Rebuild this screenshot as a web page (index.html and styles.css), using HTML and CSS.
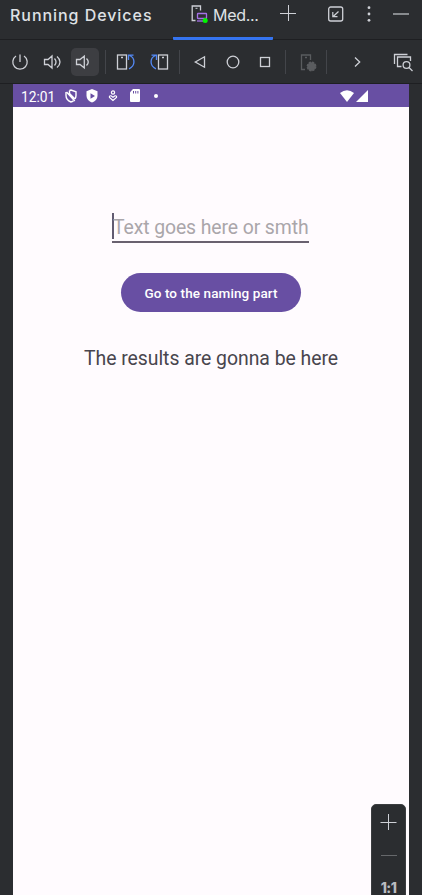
FILE: index.html
```html
<!DOCTYPE html>
<html lang="en">
<head>
<meta charset="utf-8">
<title>Running Devices</title>
<link rel="stylesheet" href="styles.css">
</head>
<body>
<main class="panel">
  <header class="header">
    <h1 class="title">Running Devices</h1>
    <div class="tab">
      <svg class="tab-icon" width="18" height="20" viewBox="0 0 18 20" fill="none">
        <path d="M4.500 16.500H1.200V2H9.500V6.500" stroke="#ced0d6" stroke-width="1.300"/>
        <path d="M4.500 4.300H6.500" stroke="#ced0d6"/>
        <rect x="6.500" y="9.500" width="9" height="5" rx=".5" stroke="#a571e6" stroke-width="1.300"/>
        <path d="M6 17H12" stroke="#a571e6" stroke-width="1.300"/>
        <circle cx="14.200" cy="16.600" r="2.500" fill="#00f500"/>
      </svg>
      <span>Med...</span>
    </div>
    <svg class="head-icon add" width="18" height="18" viewBox="0 0 18 18"><path d="M9.500 1V17M1 9.500H17" stroke="#ced0d6" fill="none"/></svg>
    <svg class="head-icon dock" width="18" height="18" viewBox="0 0 18 18" fill="none" stroke="#ced0d6">
      <rect x="1.700" y="2" width="14" height="14" rx="2" stroke-width="1.300"/>
      <path d="M11.500 6.500L6.200 11.500M5.800 7V11.700H10.500" stroke-width="1.200"/>
    </svg>
    <svg class="head-icon more" width="6" height="18" viewBox="0 0 6 18" fill="#ced0d6"><circle cx="3" cy="2.700" r="1.400"/><circle cx="3" cy="9" r="1.400"/><circle cx="3" cy="15.300" r="1.400"/></svg>
    <svg class="head-icon hide" width="16" height="18" viewBox="0 0 16 18"><path d="M0 9H16" stroke="#9a9ca0" stroke-width="1.700"/></svg>
  </header>

  <nav class="toolbar">
    <svg class="tool power" viewBox="0 0 28 28"><path d="M14 6.500V14M10 8A7.200 7.200 0 1 0 18 8"/></svg>
    <svg class="tool vol-up" viewBox="0 0 28 28"><path d="M6.500 11.500H10L14 8V20L10 16.500H6.500ZM16.500 10.500Q19.500 14 16.500 17.500M19 8.500Q22 11 22 14T19 19.500"/></svg>
    <svg class="tool vol-down" viewBox="0 0 28 28"><path d="M5.500 11.500H9L13.300 8V20L9 16.500H5.500ZM15.500 10.500Q19 14 15.500 17.500"/></svg>
    <i class="sep after-volume"></i>
    <svg class="tool rotate-left" viewBox="0 0 28 28"><rect x="5.500" y="7" width="9" height="14"/><path d="M9 9.500H11"/><path class="blue" d="M17 20.800C23.500 18 23.500 10 17.500 7.500M16.500 12V7.200H21.500"/></svg>
    <svg class="tool rotate-right" viewBox="0 0 28 28"><rect x="13.500" y="7" width="9" height="14"/><path d="M17 9.500H19"/><path class="blue" d="M11 20.800C4.500 18 4.500 10 10.500 7.500M11.500 12V7.200H6.500"/></svg>
    <i class="sep"></i>
    <svg class="tool back" viewBox="0 0 28 28"><path d="M9.300 14L18.500 8.800V19.200Z"/></svg>
    <svg class="tool home" viewBox="0 0 28 28"><circle cx="14" cy="14" r="5.800"/></svg>
    <svg class="tool overview" viewBox="0 0 28 28"><rect x="9.500" y="9.500" width="9" height="9"/></svg>
    <i class="sep"></i>
    <svg class="tool settings" viewBox="0 0 28 28"><path d="M11 21.500H7.500V7H16.500V12M11 9.500H13"/><circle class="gear" cx="17.500" cy="18.500" r="4.200"/></svg>
    <i class="sep after-settings"></i>
    <svg class="tool next" viewBox="0 0 28 28"><path d="M12 9.500L16.700 14L12 18.500"/></svg>
    <svg class="tool inspect" viewBox="0 0 28 28"><path d="M5.500 16V6.500H18.500M12.500 18.500H8.500V9H21.500V13"/><circle cx="17.500" cy="17" r="3.400"/><path d="M20 19.500L23.500 23"/></svg>
  </nav>

  <section class="device">
    <div class="status">
      <span class="clock">12:01</span>
      <svg class="shield" width="12" height="14" viewBox="0 0 12 14" fill="none" stroke="#fff" stroke-width="1.400"><path d="M4.500 1.500L6 1L11 2.800V6.500C11 8 10.600 9 10 10M8.500 12L6 13C3 11.800 1 9.500 1 6.500V3"/><path d="M1.500 3L9.800 12M4.500 1.500V4.500L10 10"/></svg>
      <svg class="protect" width="12" height="14" viewBox="0 0 12 14"><path d="M6 0L11.500 2.200V6.500C11.500 10 9 12.500 6 13.500C3 12.500.5 10 .5 6.500V2.200Z" fill="#fff"/><path d="M4.500 4.200L9 7L4.500 9.800Z" fill="#684fa3"/></svg>
      <svg class="care" width="10" height="12" viewBox="0 0 10 12" fill="none" stroke="#fff" stroke-width="1.200"><circle cx="5" cy="2.500" r="1.600"/><path d="M5 10.500L1.500 7.500Q1 5.500 3 5.800L5 7.200L7 5.800Q9 5.500 8.500 7.500Z"/></svg>
      <svg class="sd" width="10" height="13" viewBox="0 0 10 13"><path d="M3 0H9Q10 0 10 1V12Q10 13 9 13H1Q0 13 0 12V3.200Z" fill="#fff"/><path d="M3.500 2V4.500M5.700 2V4.500M7.900 2V4.500" stroke="#684fa3"/></svg>
      <i class="dot"></i>
      <svg class="wifi" width="14" height="12" viewBox="0 0 14 12"><path d="M0 3Q7-2.500 14 3L7 12Z" fill="#fff"/></svg>
      <svg class="signal" width="12" height="12" viewBox="0 0 12 12"><path d="M0 12L12 0V12Z" fill="#fff"/></svg>
    </div>
    <div class="screen">
      <div class="field">Text goes here or smth</div>
      <div class="button">Go to the naming part</div>
      <p class="result">The results are gonna be here</p>
    </div>
    <aside class="zoom">
      <svg width="17" height="18" viewBox="0 0 17 18"><path d="M8.500 1V17M.5 9.500H16.500" stroke="#ced0d6"/></svg>
      <i class="zoom-out"></i>
      <span class="zoom-reset">1:1</span>
    </aside>
  </section>
</main>
</body>
</html>
```

FILE: styles.css
```css
* { box-sizing: border-box; }
body { margin: 0; background: #2b2d30; font-family: Inter, sans-serif; }
.panel { width: 422px; height: 895px; overflow: hidden; display: flex; flex-direction: column; }
svg { display: block; flex: none; }

.header { height: 40px; flex: none; display: flex; align-items: flex-start; border-bottom: 1px solid #1e1f22; }
.title { width: 163px; margin: 5px 0 0 10px; font-size: 16px; line-height: 20px; font-weight: 500; letter-spacing: .95px; color: #dfe1e5; white-space: nowrap; }
.tab { width: 100px; height: 40px; padding: 5px 0 0 18px; display: flex; flex: none; align-items: flex-start; color: #dfe1e5; font-size: 16px; line-height: 20px; letter-spacing: -.3px; border-bottom: 3px solid #3574f0; border-radius: 1px; }
.tab-icon { margin-top: -1px; }
.tab span { margin-left: 4px; }
.head-icon { margin-top: 5px; }
.add { margin: 4px 0 0 6px; }
.dock { margin-left: 30px; }
.more { margin-left: 21px; }
.hide { margin-left: 21px; }

.toolbar { height: 44px; flex: none; display: flex; align-items: center; border-bottom: 1px solid #1e1f22; padding: 1px 0 0 6px; }
.tool { width: 28px; height: 28px; fill: none; stroke: #ced0d6; stroke-width: 1.3; }
.vol-up { margin-left: 4px; }
.vol-down { margin-left: 5px; background: #3d3e42; border-radius: 5px; }
.sep { width: 1px; height: 24px; flex: none; margin: 0 6px; background: #43454a; }
.rotate-right, .home { margin-left: 5px; }
.overview { margin-left: 4px; }
.blue { stroke: #548af7; }
.settings { stroke: #5a5c5f; margin-left: 2px; }
.gear { fill: #5a5c5f; stroke: #5a5c5f; stroke-width: 1.5; stroke-dasharray: 2.2 1.1; }
.after-settings { margin: 0 16px 0 4px; }
.inspect { margin-left: 18px; }

.device { position: relative; flex: 1; width: 396px; margin-left: 13px; background: #fffbfe; font-family: Roboto, sans-serif; }
.status { height: 23px; background: #684fa3; color: #fff; display: flex; align-items: center; padding-left: 8px; }
.clock { width: 43px; font-size: 13.8px; line-height: 20px; padding-top: 2px; }
.shield { margin-left: 1px; }
.protect { margin-left: 9px; }
.care { margin-left: 10px; }
.sd { margin-left: 12px; }
.dot { width: 4px; height: 4px; margin-left: 14px; border-radius: 50%; background: #fff; }
.wifi { margin-left: 182px; }
.signal { margin-left: 2px; }

.screen { display: flex; flex-direction: column; align-items: center; padding-top: 106px; }
.field { width: 197px; height: 30px; margin-right: 1px; background: linear-gradient(#625b71, #625b71) 0 0 / 2px 26px no-repeat; border-bottom: 2px solid #69616f; padding-left: 1px; font-size: 19.4px; letter-spacing: -.1px; line-height: 29px; color: #aaa6aa; white-space: nowrap; }
.button { width: 180px; height: 39px; margin-top: 30px; border-radius: 20px; background: #684fa3; color: #fff; font-size: 13.5px; letter-spacing: .1px; font-weight: 500; line-height: 40px; text-align: center; white-space: nowrap; }
.result { margin: 34px 0 0; font-size: 19.4px; line-height: 26px; letter-spacing: -.03px; color: #48454d; white-space: nowrap; }

.zoom { position: absolute; left: 358px; top: 720px; width: 35px; height: 100px; display: flex; flex-direction: column; align-items: center; padding-top: 8px; background: #2b2d30; border: 1px solid #3b3d40; border-radius: 5px; }
.zoom-out { width: 16px; height: 1px; margin-top: 24px; background: #66686b; }
.zoom-reset { margin-top: 22px; font: 800 14px/20px Inter, sans-serif; letter-spacing: -.6px; color: #b9bbc0; }
```
